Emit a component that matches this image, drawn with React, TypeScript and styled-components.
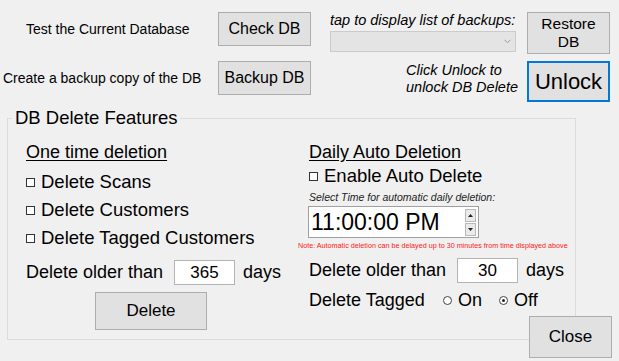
import styled, { createGlobalStyle } from 'styled-components'

const GlobalStyle = createGlobalStyle`
  html,
  body {
    margin: 0;
    padding: 0;
    background: #f0f0f0;
  }

  body {
    font-family: 'Liberation Sans', Arial, sans-serif;
    color: #000;
    width: 619px;
    height: 361px;
    overflow: hidden;
  }
`

const Window = styled.div`
  width: 619px;
  height: 361px;
  background: #f0f0f0;
`

const TopBar = styled.div`
  box-sizing: border-box;
  height: 118px;
  padding: 12px 0 0 3px;
  display: flex;
  align-items: flex-start;
`

const ActionGrid = styled.div`
  display: grid;
  grid-template-columns: 215px 93px;
  grid-auto-rows: 34px;
  row-gap: 15px;
`

const ActionLabel = styled.div<{ $indent: number }>`
  padding-left: ${(p) => p.$indent}px;
  font-size: 14px;
  display: flex;
  align-items: center;
  white-space: nowrap;
`

const Button = styled.button<{ $size?: number; $focused?: boolean }>`
  box-sizing: border-box;
  margin: 0;
  padding: 0;
  background: #e1e1e1;
  border: ${(p) => (p.$focused ? '2px solid #0078d7' : '1px solid #adadad')};
  font-family: 'Liberation Sans', Arial, sans-serif;
  font-size: ${(p) => p.$size ?? 16}px;
  line-height: 1.15;
  color: #000;
`

const RestoreGrid = styled.div`
  margin-left: 19px;
  display: grid;
  grid-template-columns: 189px 83px;
  grid-template-rows: 42px 41px;
  column-gap: 8px;
  row-gap: 7px;
`

const BackupPicker = styled.div`
  display: flex;
  flex-direction: column;
`

const Hint = styled.div`
  font-size: 14.5px;
  font-style: italic;
  line-height: 16px;
  white-space: nowrap;
`

const Combo = styled.div`
  box-sizing: border-box;
  margin-top: 3px;
  width: 186px;
  height: 21px;
  background: #e4e4e4;
  border: 1px solid #cbcbcb;
  display: flex;
  justify-content: flex-end;
  align-items: center;
  padding-right: 4px;
`

const UnlockHint = styled.div`
  padding: 1px 0 0 76px;
  font-size: 14.5px;
  font-style: italic;
  line-height: 17px;
  white-space: nowrap;
`

const Bottom = styled.div`
  display: grid;
  grid-template-columns: 7px 522px 47px 36px;
  grid-template-rows: 198px 24px 18px;
`

const Group = styled.div`
  grid-column: 2 / 4;
  grid-row: 1 / 3;
  position: relative;
  box-sizing: border-box;
  border: 1px solid #dcdcdc;
  padding: 23px 0 0 18px;
  display: grid;
  grid-template-columns: 283px 1fr;
  align-items: start;
`

const GroupTitle = styled.div`
  position: absolute;
  top: -11px;
  left: 4px;
  padding: 0 3px;
  background: #f0f0f0;
  font-size: 18.5px;
  line-height: 20px;
  white-space: nowrap;
`

const Column = styled.div`
  display: flex;
  flex-direction: column;
  align-items: flex-start;
`

const Heading = styled.div`
  font-size: 18px;
  line-height: 20px;
  text-decoration: underline;
  text-underline-offset: 2px;
  white-space: nowrap;
`

const Row = styled.div<{ $height: number; $top?: number; $size?: number }>`
  height: ${(p) => p.$height}px;
  margin-top: ${(p) => p.$top ?? 0}px;
  display: flex;
  align-items: center;
  font-size: ${(p) => p.$size ?? 18}px;
  white-space: nowrap;
`

const Box = styled.span`
  box-sizing: border-box;
  width: 9px;
  height: 9px;
  border: 1px solid #333;
  background: #fff;
  margin-right: 6px;
`

const FieldLabel = styled.span<{ $width: number }>`
  width: ${(p) => p.$width}px;
`

const NumberBox = styled.div`
  box-sizing: border-box;
  width: 61px;
  height: 25px;
  background: #fff;
  border: 1px solid #b4b4b4;
  display: flex;
  align-items: center;
  justify-content: center;
  font-size: 17px;
  margin-right: 8px;
`

const SmallItalic = styled.div`
  height: 14px;
  line-height: 14px;
  font-size: 10.5px;
  font-style: italic;
  color: #222;
  white-space: nowrap;
`

const TimePicker = styled.div`
  box-sizing: border-box;
  margin: 2px 0 0 -1px;
  width: 171px;
  height: 32px;
  background: #fff;
  border: 1px solid #a0a0a0;
  display: flex;
  align-items: center;
  justify-content: space-between;
  padding: 0 1px 0 2px;
  font-size: 23px;
`

const Spin = styled.div`
  display: flex;
  flex-direction: column;
  gap: 1px;
  margin-right: 1px;
`

const SpinHalf = styled.div`
  box-sizing: border-box;
  width: 11px;
  height: 13px;
  background: #eaeaea;
  border: 1px solid #b9b9b9;
  display: flex;
  align-items: center;
  justify-content: center;
`

const Note = styled.div`
  margin: 3px 0 0 -11px;
  height: 10px;
  line-height: 10px;
  font-size: 7.2px;
  color: #ff2020;
  white-space: nowrap;
`

const Radio = styled.span<{ $checked?: boolean }>`
  box-sizing: border-box;
  width: 9px;
  height: 9px;
  border-radius: 50%;
  border: 1px solid #444;
  background: #fff;
  margin-right: 6px;
  display: flex;
  align-items: center;
  justify-content: center;

  &::after {
    content: '';
    width: 3px;
    height: 3px;
    border-radius: 50%;
    background: ${(p) => (p.$checked ? '#222' : 'transparent')};
  }
`

const RadioOption = styled.span<{ $width: number }>`
  width: ${(p) => p.$width}px;
  display: flex;
  align-items: center;
`

const DeleteButton = styled(Button)`
  margin: 7px 0 0 69px;
  width: 112px;
  height: 38px;
`

const CloseButton = styled(Button)`
  position: relative;
  z-index: 1;
  grid-column: 3 / 5;
  grid-row: 2 / 4;
  width: 83px;
  height: 42px;
`

const Check = ({ label, size }: { label: string; size?: number }) => (
  <Row $height={28} $size={size}>
    <Box />
    {label}
  </Row>
)

const OlderThan = ({ days }: { days: number }) => (
  <>
    <FieldLabel $width={148}>Delete older than</FieldLabel>
    <NumberBox>{days}</NumberBox>
    days
  </>
)

const Triangle = ({ up }: { up?: boolean }) => (
  <svg width="5" height="3" viewBox="0 0 5 3">
    <polygon points={up ? '0,3 5,3 2.5,0' : '0,0 5,0 2.5,3'} fill="#222" />
  </svg>
)

const App = () => {
  return (
    <Window>
      <GlobalStyle />

      <TopBar>
        <ActionGrid>
          <ActionLabel $indent={23}>Test the Current Database</ActionLabel>
          <Button>Check DB</Button>
          <ActionLabel $indent={0}>Create a backup copy of the DB</ActionLabel>
          <Button>Backup DB</Button>
        </ActionGrid>

        <RestoreGrid>
          <BackupPicker>
            <Hint>tap to display list of backups:</Hint>
            <Combo>
              <svg width="7" height="5" viewBox="0 0 7 5">
                <polyline points="0.5,0.8 3.5,3.8 6.5,0.8" fill="none" stroke="#9a9a9a" strokeWidth="1" />
              </svg>
            </Combo>
          </BackupPicker>
          <Button $size={15.5}>
            Restore
            <br />
            DB
          </Button>
          <UnlockHint>
            Click Unlock to
            <br />
            unlock DB Delete
          </UnlockHint>
          <Button $size={22} $focused>
            Unlock
          </Button>
        </RestoreGrid>
      </TopBar>

      <Bottom>
        <Group>
          <GroupTitle>DB Delete Features</GroupTitle>

          <Column>
            <Heading>One time deletion</Heading>
            <Row $height={0} $top={6} />
            <Check label="Delete Scans" size={18.5} />
            <Check label="Delete Customers" size={18.5} />
            <Check label="Delete Tagged Customers" size={18.5} />
            <Row $height={25} $top={8}>
              <OlderThan days={365} />
            </Row>
            <DeleteButton $size={17}>Delete</DeleteButton>
          </Column>

          <Column>
            <Heading>Daily Auto Deletion</Heading>
            <Check label="Enable Auto Delete" size={18.5} />
            <SmallItalic>Select Time for automatic daily deletion:</SmallItalic>
            <TimePicker>
              11:00:00 PM
              <Spin>
                <SpinHalf>
                  <Triangle up />
                </SpinHalf>
                <SpinHalf>
                  <Triangle />
                </SpinHalf>
              </Spin>
            </TimePicker>
            <Note>Note: Automatic deletion can be delayed up to 30 minutes from time displayed above</Note>
            <Row $height={25} $top={7}>
              <OlderThan days={30} />
            </Row>
            <Row $height={24} $top={5}>
              <FieldLabel $width={134}>Delete Tagged</FieldLabel>
              <RadioOption $width={56}>
                <Radio />
                On
              </RadioOption>
              <RadioOption $width={50}>
                <Radio $checked />
                Off
              </RadioOption>
            </Row>
          </Column>
        </Group>

        <CloseButton $size={17}>Close</CloseButton>
      </Bottom>
    </Window>
  )
}

export default App
